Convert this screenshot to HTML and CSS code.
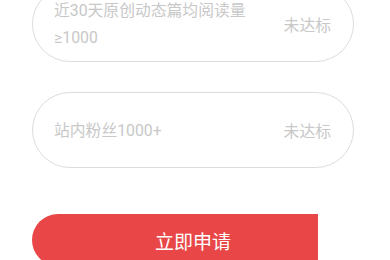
FILE: index.html
```html
<!DOCTYPE html>
<html lang="zh-CN">
<head>
    <meta charset="UTF-8">
    <meta name="viewport" content="width=device-width, initial-scale=1.0">
    <title>申请条件</title>
    <link rel="stylesheet" href="styles.css">
</head>
<body>
    <div class="page">
        <div class="conditions">
            <div class="condition">
                <span class="condition-text">近30天原创动态篇均阅读量<br>≥1000</span>
                <span class="condition-status">未达标</span>
            </div>
            <div class="condition">
                <span class="condition-text">站内粉丝1000+</span>
                <span class="condition-status">未达标</span>
            </div>
        </div>

        <button class="apply-btn">立即申请</button>
    </div>
</body>
</html>
```

FILE: styles.css
```css
* { margin: 0; padding: 0; box-sizing: border-box; }
body {
    font-family: Roboto, "Noto Sans CJK SC", sans-serif;
    background: #fff;
    color: #c8c8c8;
    overflow: hidden;
}
.page {
    padding: 0 36px 0 32px;
    margin-top: -14px;
}
.conditions {
    display: flex;
    flex-direction: column;
    gap: 30px;
}
.condition {
    display: flex;
    align-items: center;
    justify-content: space-between;
    height: 76px;
    padding: 0 22px 0 21px;
    border: 1px solid #dcdcdc;
    border-radius: 38px;
}
.condition-text {
    font-size: 15.8px;
    line-height: 27px;
}
.condition-status {
    font-size: 15.8px;
}
.apply-btn {
    display: block;
    width: 100%;
    height: 52px;
    margin-top: 46px;
    border: none;
    border-radius: 26px;
    background: linear-gradient(to right, #e94747 286px, transparent 286px);
    color: #fff;
    font-family: inherit;
    font-size: 19px;
}
```
